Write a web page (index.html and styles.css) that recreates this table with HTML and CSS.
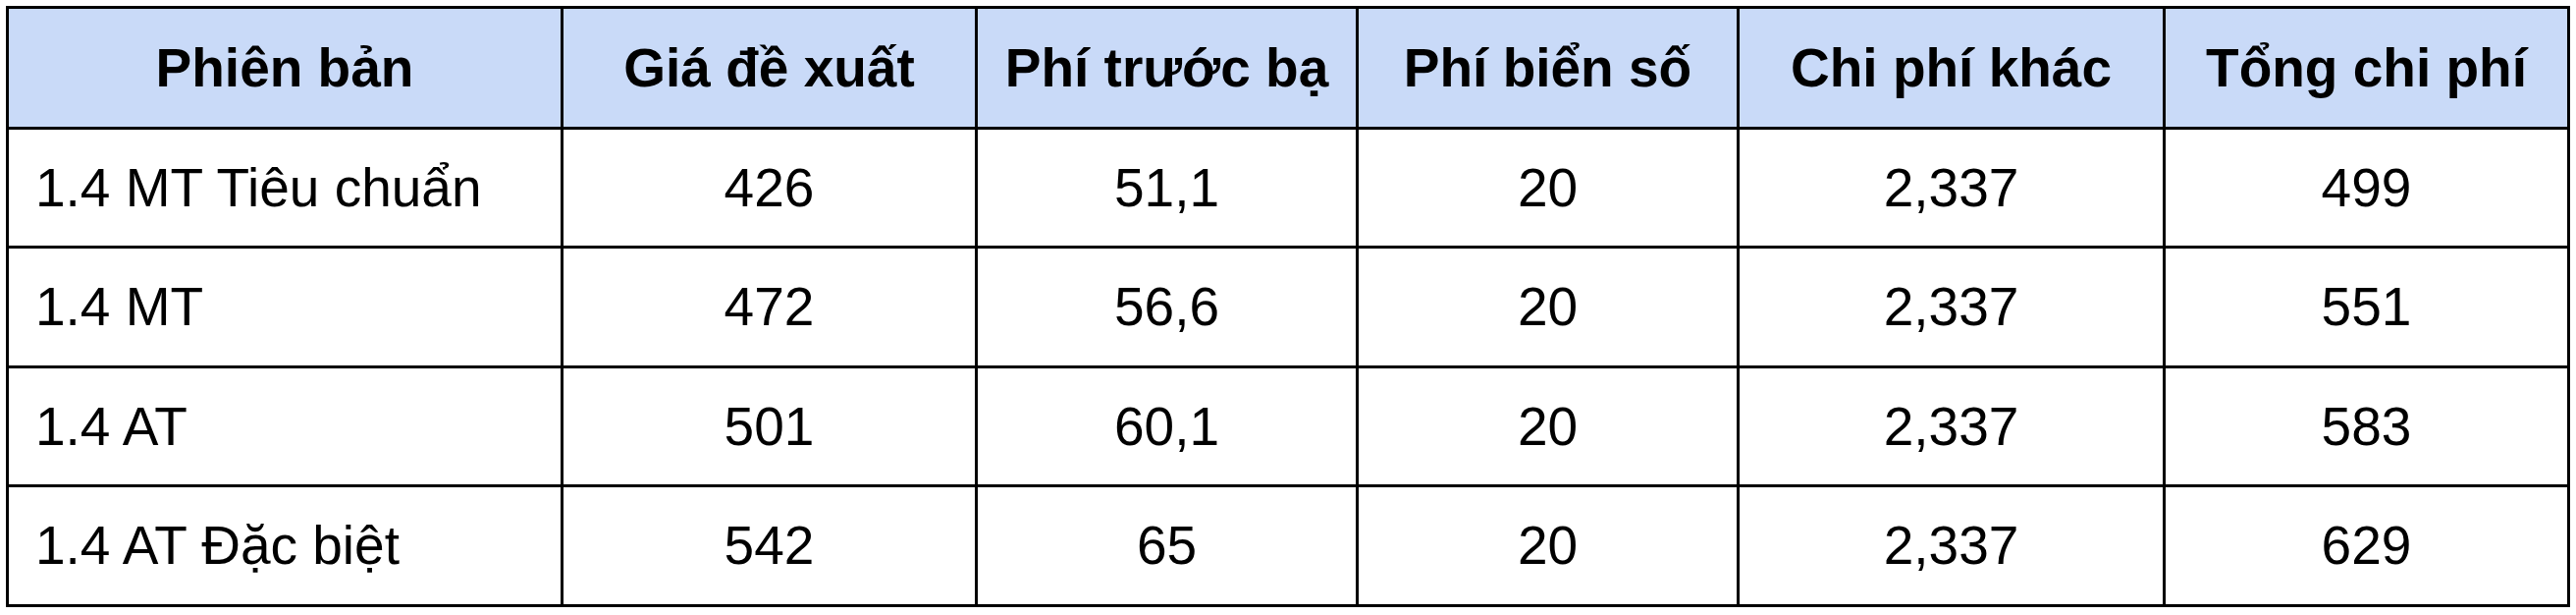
FILE: index.html
```html
<!DOCTYPE html>
<html lang="vi">
<head>
<meta charset="utf-8">
<title>Bảng giá lăn bánh</title>
<link rel="stylesheet" href="styles.css">
</head>
<body>
<table class="price-table">
  <colgroup>
    <col class="c1"><col class="c2"><col class="c3"><col class="c4"><col class="c5"><col class="c6">
  </colgroup>
  <thead>
    <tr class="head-row">
      <th>Phiên bản</th>
      <th>Giá đề xuất</th>
      <th>Phí trước bạ</th>
      <th>Phí biển số</th>
      <th>Chi phí khác</th>
      <th>Tổng chi phí</th>
    </tr>
  </thead>
  <tbody>
    <tr class="r1">
      <td class="name">1.4 MT Tiêu chuẩn</td>
      <td>426</td><td>51,1</td><td>20</td><td>2,337</td><td>499</td>
    </tr>
    <tr class="r2">
      <td class="name">1.4 MT</td>
      <td>472</td><td>56,6</td><td>20</td><td>2,337</td><td>551</td>
    </tr>
    <tr class="r3">
      <td class="name">1.4 AT</td>
      <td>501</td><td>60,1</td><td>20</td><td>2,337</td><td>583</td>
    </tr>
    <tr class="r4">
      <td class="name">1.4 AT Đặc biệt</td>
      <td>542</td><td>65</td><td>20</td><td>2,337</td><td>629</td>
    </tr>
  </tbody>
</table>
</body>
</html>
```

FILE: styles.css
```css
html, body {
  margin: 0;
  padding: 0;
  background: #ffffff;
}

body {
  padding: 6px;
  font-family: "Liberation Sans", Arial, sans-serif;
  color: #000000;
}

.price-table {
  border-collapse: separate;
  border-spacing: 3px;
  background: #000000;
  table-layout: fixed;
  width: 2612px;
}

.c1 { width: 562px; }
.c2 { width: 419px; }
.c3 { width: 385px; }
.c4 { width: 385px; }
.c5 { width: 431px; }
.c6 { width: 409px; }

th, td {
  padding: 0;
  font-size: 55px;
  line-height: 1;
  text-align: center;
  vertical-align: middle;
  white-space: nowrap;
}

th {
  background: #c9daf8;
  font-weight: bold;
}

td {
  background: #ffffff;
  font-weight: normal;
}

td.name {
  text-align: left;
  padding-left: 27px;
}

.head-row { height: 120px; }
.r1 { height: 118px; }
.r2 { height: 119px; }
.r3 { height: 118px; }
.r4 { height: 119px; }
```
